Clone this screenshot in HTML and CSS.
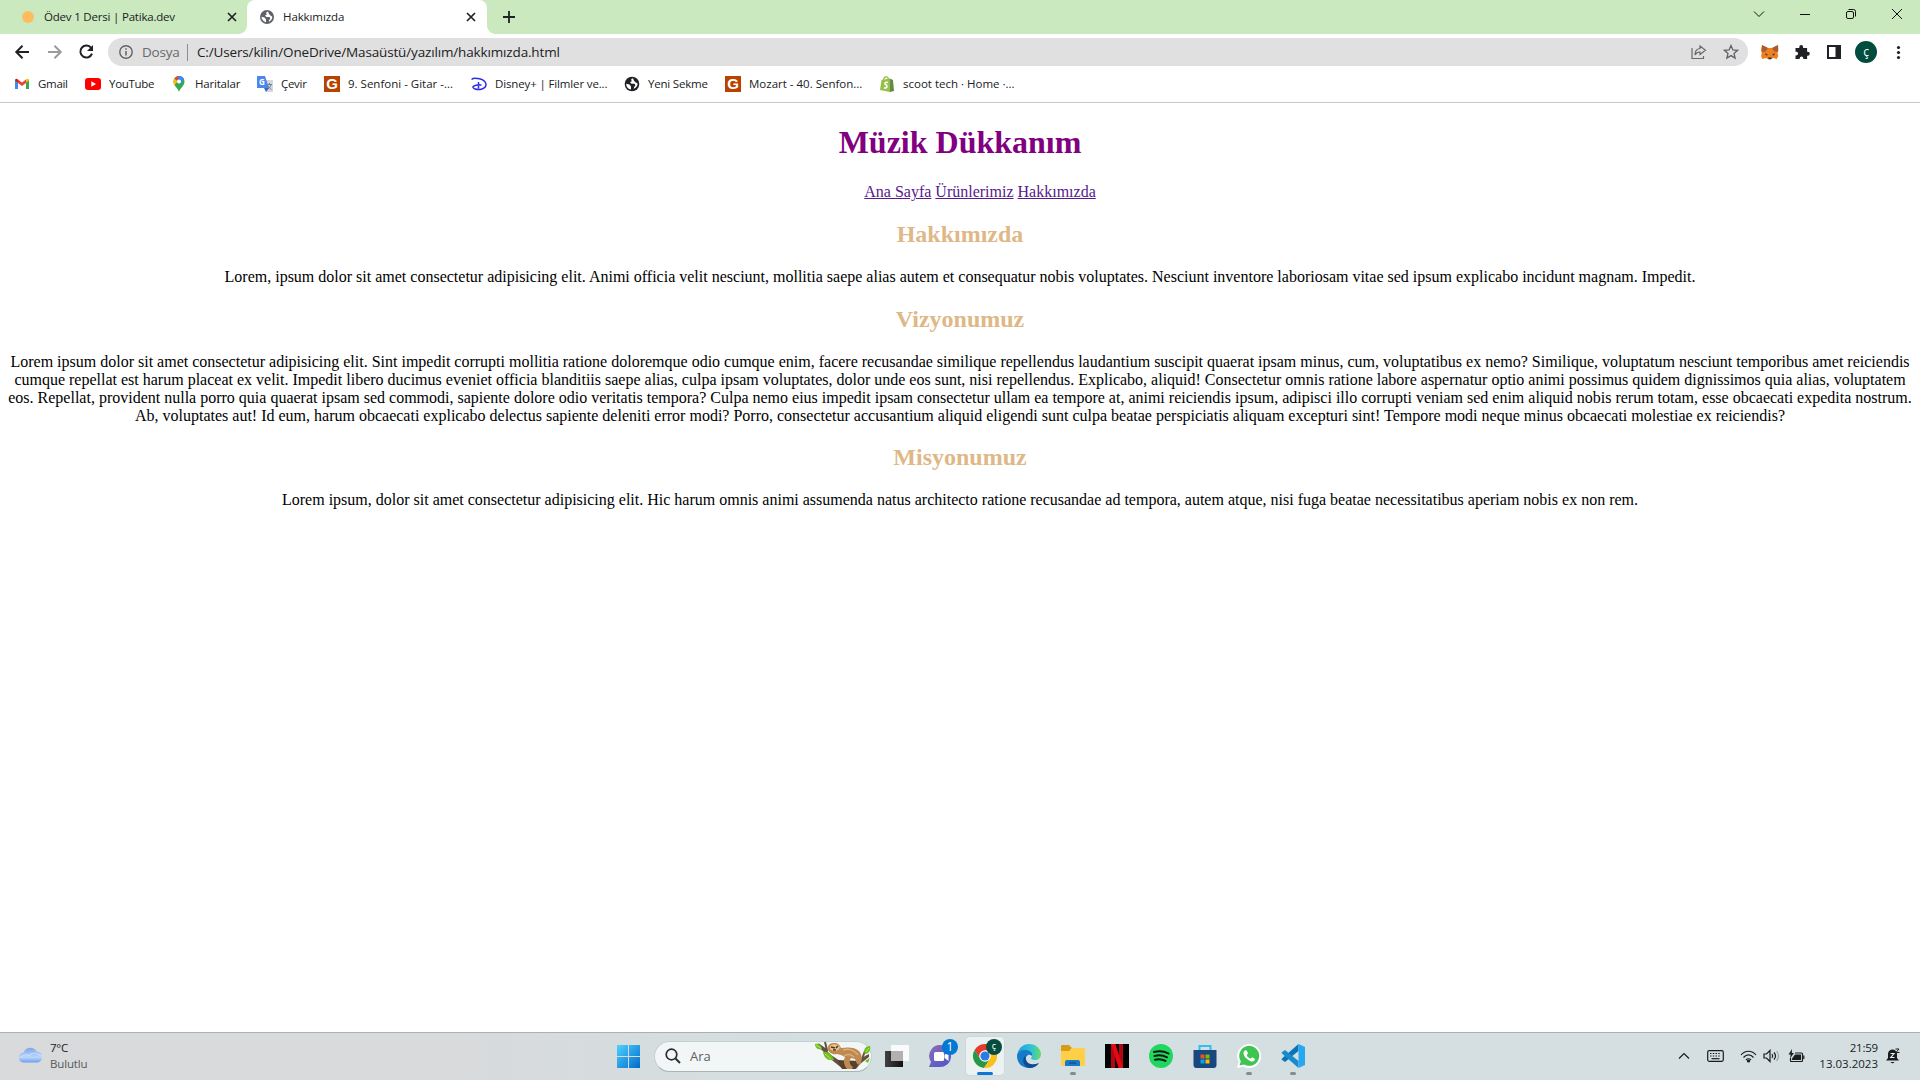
FILE: index.html
```html
<!DOCTYPE html>
<html lang="tr">
<head>
<meta charset="utf-8">
<title>Hakkımızda</title>
<link rel="stylesheet" href="styles.css">
</head>
<body>
<header class="tabs">
  <div class="tab">
    <span class="dot"></span><span class="tab-title t-patika">Ödev 1 Dersi | Patika.dev</span>
    <svg class="x" width="10" height="10" viewBox="0 0 10 10"><path d="M1 1l8 8M9 1L1 9"/></svg>
  </div>
  <div class="tab active">
    <svg width="14" height="14" viewBox="0 0 14 14"><circle cx="7" cy="7" r="7" fill="#5f6368"/><path d="M1.500 6.800L4.500 7.500 6 9.500v2.700C3.500 11.800 1.500 9.500 1.500 6.800zM8 1.500C6 2 5.500 3.500 7 4.200L5 5.500 6.500 7h2.700c1.500.5 1.300 2.200 0 3l-.5 1.800c2-.7 3.700-2.700 3.600-5L10.500 5.500 9 4z" fill="#fff"/></svg>
    <span class="tab-title t-hak">Hakkımızda</span>
    <svg class="x" width="10" height="10" viewBox="0 0 10 10"><path d="M1 1l8 8M9 1L1 9"/></svg>
  </div>
  <svg class="plus" width="12" height="12" viewBox="0 0 12 12"><path d="M6 0v12M0 6h12" stroke="#202124" stroke-width="1.800"/></svg>
  <div class="window-buttons">
    <svg width="46" height="28" viewBox="0 0 46 28"><path d="M18 11.500l5 5 5-5"/></svg>
    <svg width="46" height="28" viewBox="0 0 46 28"><path d="M18 14.500h10"/></svg>
    <svg width="46" height="28" viewBox="0 0 46 28"><rect x="18.500" y="11.500" width="7" height="7" rx="1.500"/><path d="M20.500 9.500h5q2 0 2 2v5"/></svg>
    <svg width="46" height="28" viewBox="0 0 46 28"><path d="M18 9l10 10M28 9L18 19"/></svg>
  </div>
</header>

<div class="toolbar">
  <svg class="nav-icon" width="32" height="28" viewBox="0 0 32 28"><path d="M22 14H9.500M15.500 7.800L9.300 14l6.200 6.200" stroke="#202124"/></svg>
  <svg class="nav-icon" width="32" height="28" viewBox="0 0 32 28"><path d="M9 14h12.500M15.500 7.800l6.200 6.200-6.200 6.200" stroke="#9b9b9d"/></svg>
  <svg class="nav-icon" width="32" height="28" viewBox="0 0 32 28"><path d="M20.200 10A6 6 0 1 0 21 15.700" stroke="#202124"/><path d="M22 7v6h-6z" fill="#202124"/></svg>
  <div class="address">
    <svg width="14" height="14" viewBox="0 0 14 14"><circle cx="7" cy="7" r="6.200" fill="none" stroke="#5f6368" stroke-width="1.400"/><path d="M7 6v4.500M7 3.300v1.500" stroke="#5f6368" stroke-width="1.500"/></svg>
    <span class="scheme">Dosya</span><span class="rule"></span>
    <span class="url">C:/Users/kilin/OneDrive/Masaüstü/yazılım/hakkımızda.html</span>
    <svg class="share" width="16" height="16" viewBox="0 0 16 16" fill="none" stroke="#66696d" stroke-width="1.200"><path d="M1 4v10.500h11.500V12M9 2l5.500 4.300L9 10.500V8C6.500 8 5 9 4 11c0-4 2-6.200 5-6.500z"/></svg>
    <svg class="star" width="16" height="16" viewBox="0 0 16 16"><path d="M8 1.500l1.900 4.400 4.700.4-3.600 3.100 1.100 4.700L8 11.600 3.900 14.100 5 9.400 1.400 6.300l4.700-.4z" fill="none" stroke="#5f6368" stroke-width="1.300"/></svg>
  </div>
  <div class="extensions">
    <svg width="32" height="28" viewBox="0 0 32 28"><path d="M8 7l6 3h4l6-3 .5 5-1 3 .8 3-1.500 3-4-1-2 1.300h-2.600l-2-1.300-4 1-1.200-3 .8-3-1-3z" fill="#ed8021"/><path d="M8 7l6 3-2.500 3.500-3.500.500zM24 7l-6 3 2.500 3.500 3.500.500z" fill="#a75c32"/><path d="M11 15l3 2-2 .5zM21 15l-3 2 2 .5zM14 19.500h4l-.8 1.800h-2.400z" fill="#3b3031"/></svg>
    <svg width="32" height="28" viewBox="0 0 32 28"><path d="M9.500 10h3.800V9a1.900 1.900 0 0 1 3.800 0v1h4v3.700h.7a2 2 0 0 1 0 4h-.7V21h-3.800v-.8a1.800 1.800 0 0 0-3.600 0v.8H9.500v-3.600h.8a1.800 1.800 0 0 0 0-3.600h-.8z" fill="#202124"/></svg>
    <svg width="32" height="28" viewBox="0 0 32 28"><path d="M9 7h14v14H9zM11 9v10h6.500V9z" fill="#202124" fill-rule="evenodd"/></svg>
    <span class="avatar">ç</span>
    <svg width="32" height="28" viewBox="0 0 32 28" fill="#202124"><circle cx="16.500" cy="9.500" r="1.600"/><circle cx="16.500" cy="14.500" r="1.600"/><circle cx="16.500" cy="19.500" r="1.600"/></svg>
  </div>
</div>

<nav class="bookmarks">
  <a class="b-gmail"><svg viewBox="0 0 16 16"><path d="M1 3.500v9.500h3V6z" fill="#4285f4"/><path d="M15 3.500v9.500h-3V6z" fill="#34a853"/><path d="M1 4.500l3 2.200V3.500C2.500 2 1 2.800 1 4.500z" fill="#c5221f"/><path d="M12 3.500v3.200l3-2.200c0-1.700-1.500-2.500-3-1z" fill="#fbbc04"/><path d="M4 3.500l4 3 4-3v3.400L8 10 4 6.900z" fill="#ea4335"/></svg><span>Gmail</span></a>
  <a class="b-youtube"><svg viewBox="0 0 16 16"><rect y="2" width="16" height="12" rx="3" fill="#f00"/><path d="M6.300 5.300L11 8l-4.700 2.700z" fill="#fff"/></svg><span>YouTube</span></a>
  <a class="b-maps"><svg viewBox="0 0 16 16"><path d="M8 16C7 12 2.500 10 2.500 5.500A5.500 5.500 0 0 1 13.500 5.500C13.500 10 9 12 8 16z" fill="#34a853"/><path d="M3.500 2.500L7 5 3.500 9.300C2 6.500 2.300 4 3.500 2.500z" fill="#fbbc04"/><path d="M3.500 2.500A5.500 5.500 0 0 1 7.500 0L10 1 6.300 5z" fill="#ea4335"/><path d="M8 0a5.500 5.500 0 0 1 5 3L8.500 8.500 6 5.500z" fill="#4285f4"/><circle cx="8" cy="5.400" r="2" fill="#fff"/></svg><span>Haritalar</span></a>
  <a class="b-translate"><svg viewBox="0 0 16 16"><path d="M7 4h9v12H9z" fill="#d6d8db"/><path d="M10 8.500h5M12.500 7v1.500M14 8.500c-.5 2.500-2 4-3.500 5M11 9.500c.8 2 2 3 3.500 4" stroke="#718087" fill="none"/><path d="M0 0h8l4 12H0z" fill="#4a87ee"/><path d="M7 12h5l-3 4z" fill="#3367d6"/></svg><b class="translate-g">G</b><span>Çevir</span></a>
  <a class="b-nine"><i class="g-tile">G</i><span>9. Senfoni - Gitar -...</span></a>
  <a class="b-disney"><svg viewBox="0 0 16 16" fill="none" stroke="#2b2be8" stroke-width="1.500"><path d="M.5 3.500C3 1 14.500 2.500 15 8.500c0 4.500-7 6-11.500 4.200-3.500-1.700-1-4.200 7-3.700M7.500 6v6.500"/></svg><span>Disney+ | Filmler ve...</span></a>
  <a class="b-tab"><svg viewBox="0 0 16 16"><circle cx="8" cy="8" r="7.300" fill="#202124"/><path d="M2.200 7.700l3.300.8 1.500 2v3C4.500 13.200 2.200 11 2.200 7.700zM9 2.300C7 2.800 6.500 4.300 8 5L6 6.300l1.500 1.500h2.700c1.500.5 1.300 2.200 0 3l-.5 2c2.200-.8 4-2.900 3.900-5.300L11.500 6.300 10 4.800z" fill="#fff"/></svg><span>Yeni Sekme</span></a>
  <a class="b-mozart"><i class="g-tile">G</i><span>Mozart - 40. Senfon...</span></a>
  <a class="b-scoot"><svg viewBox="0 0 16 16"><path d="M2.500 4l8-1.500L11 16 1 14z" fill="#95bf47"/><path d="M10.500 2.500L14 4l1 11-4 1z" fill="#5e8e3e"/><path d="M4.500 4C5 0 9 0 9.500 3.500" fill="none" stroke="#95bf47" stroke-width="1.200"/><path d="M9 6.500C6 5.500 5 8 7 9s1 4-2 2.700" fill="none" stroke="#fff" stroke-width="1.500"/></svg><span>scoot tech · Home ·...</span></a>
</nav>

<main class="page">
  <h1>Müzik Dükkanım</h1>
  <ul><li><a href="#">Ana Sayfa</a></li> <li><a href="#">Ürünlerimiz</a></li> <li><a href="#">Hakkımızda</a></li></ul>
  <h2>Hakkımızda</h2>
  <p>Lorem, ipsum dolor sit amet consectetur adipisicing elit. Animi officia velit nesciunt, mollitia saepe alias autem et consequatur nobis voluptates. Nesciunt inventore laboriosam vitae sed ipsum explicabo incidunt magnam. Impedit.</p>
  <h2>Vizyonumuz</h2>
  <p>Lorem ipsum dolor sit amet consectetur adipisicing elit. Sint impedit corrupti mollitia ratione doloremque odio cumque enim, facere recusandae similique repellendus laudantium suscipit quaerat ipsam minus, cum, voluptatibus ex nemo? Similique, voluptatum nesciunt temporibus amet reiciendis cumque repellat est harum placeat ex velit. Impedit libero ducimus eveniet officia blanditiis saepe alias, culpa ipsam voluptates, dolor unde eos sunt, nisi repellendus. Explicabo, aliquid! Consectetur omnis ratione labore aspernatur optio animi possimus quidem dignissimos quia alias, voluptatem eos. Repellat, provident nulla porro quia quaerat ipsam sed commodi, sapiente dolore odio veritatis tempora? Culpa nemo eius impedit ipsam consectetur ullam ea tempore at, animi reiciendis ipsum, adipisci illo corrupti veniam sed enim aliquid nobis rerum totam, esse obcaecati expedita nostrum. Ab, voluptates aut! Id eum, harum obcaecati explicabo delectus sapiente deleniti error modi? Porro, consectetur accusantium aliquid eligendi sunt culpa beatae perspiciatis aliquam excepturi sint! Tempore modi neque minus obcaecati molestiae ex reiciendis?</p>
  <h2>Misyonumuz</h2>
  <p>Lorem ipsum, dolor sit amet consectetur adipisicing elit. Hic harum omnis animi assumenda natus architecto ratione recusandae ad tempora, autem atque, nisi fuga beatae necessitatibus aperiam nobis ex non rem.</p>
</main>

<footer class="taskbar">
  <div class="weather">
    <svg width="26" height="18" viewBox="0 0 26 18"><defs><linearGradient id="cl" x2="0" y2="1"><stop stop-color="#7fa6ea"/><stop offset=".65" stop-color="#b9d5fc"/><stop offset="1" stop-color="#6f9cec"/></linearGradient></defs><path d="M6 16.500a5 5 0 0 1-.3-10A7 7 0 0 1 18.500 5.500a5.600 5.600 0 0 1 1.200 11z" fill="url(#cl)"/><path d="M3 12c2-4 6-4 8-2 3-4 8-4 12 0" fill="none" stroke="#d4e5ff" stroke-width="1.200" opacity=".7"/></svg>
    <div><div class="temp">7°C</div><div class="cond">Bulutlu</div></div>
  </div>
  <div class="apps">
    <div class="app"><svg viewBox="0 0 24 24"><defs><linearGradient id="wn" x2="1" y2="1"><stop stop-color="#4fd2ff"/><stop offset="1" stop-color="#0069cc"/></linearGradient></defs><path d="M1 1h11v11H1zM13 1h11v11H13zM1 13h11v11H1zM13 13h11v11H13z" fill="url(#wn)"/></svg></div>
    <div class="search">
      <svg width="16" height="16" viewBox="0 0 16 16"><path d="M10.500 10.500l4.500 4.500" stroke="#2a2e30" stroke-width="2"/><circle cx="6.500" cy="6.500" r="5.300" fill="none" stroke="#2a2e30" stroke-width="1.700"/></svg>
      <span>Ara</span>
      <svg class="sloth" width="56" height="30" viewBox="0 0 56 30">
        <path d="M2 3l9 6 5 5 12 8 14-1 8-6 4-2v3l-9 7-4 5H28L18 20 9 11 2 5z" fill="#66503f"/><path d="M10 1l2 8M3 3l10 7M50 10l-3 8" stroke="#66503f" stroke-width="2"/><path d="M22 19l5 9h13l5-8" fill="#59402f"/>
        <path d="M13 7c0-4 3-5 6-5 4 0 6 2 7 5 7-1 14-1 18 3 4 5 3 10 1 14-3 0-4-3-5-6l-4-1c-2 3-2 6 2 9l-1 2h-5c-3-4-4-8-2-12l-4-2-4-1c-4 1-9-1-9-6z" fill="#bd8a51"/><path d="M15 5c3-3 8-2 10 1-1 4-6 6-10 2z" fill="#e7c48d"/><path d="M16 6l4 1M23 5l-2 2M18 9h3" stroke="#59351f" stroke-width="1.500"/><path d="M28 9c6-2 11 0 15 5M29 15c3-2 7-2 10 1" fill="none" stroke="#dcb077" stroke-width="1.500"/>
        <path d="M0 3c4-1 6 1 7 5-4 1-7-1-7-5zM8 11c5-1 9 2 11 8-6 1-10-2-11-8zM55 5c-5 0-7 4-5 8 4 0 6-4 5-8zM55 17l-5 3 3 2z" fill="#71bd21"/><path d="M1 4l5 3M10 13l6 5M54 7l-3 4" stroke="#b7e75c"/>
      </svg>
    </div>
    <div class="app"><svg viewBox="0 0 24 24"><defs><linearGradient id="tv" x2="1"><stop stop-color="#414141"/><stop offset="1" stop-color="#101010"/></linearGradient></defs><path d="M0 7h18v16H0z" fill="url(#tv)"/><path d="M6 1h18v16H6z" fill="#fff" opacity=".85"/><path d="M6 7h12v10H6z" fill="#b1b1b1"/></svg></div>
    <div class="app"><svg viewBox="0 0 24 24"><defs><linearGradient id="ch" y2="1"><stop stop-color="#8b6db5"/><stop offset="1" stop-color="#4b55ca"/></linearGradient></defs><path d="M12 1a11 11 0 1 1-2 22H0l2-5A11 11 0 0 1 12 1z" fill="url(#ch)"/><rect x="5" y="8" width="10" height="9" rx="1.500" fill="#fff"/><path d="M15.500 11l4-3v9l-4-3z" fill="#fff"/></svg><b class="badge blue">1</b></div>
    <div class="app open"><svg viewBox="0 0 24 24"><path d="M1.600 6A12 12 0 0 1 22.400 6L12 6.500 7 15z" fill="#e33b2e"/><path d="M1.600 6A12 12 0 0 0 11 24l6-9-10-.5z" fill="#279847"/><path d="M12 6.500L22.400 6A12 12 0 0 1 11 24l6-9z" fill="#fbc116"/><circle cx="12" cy="12" r="5.800" fill="#fff"/><circle cx="12" cy="12" r="4.600" fill="#2c7be5"/></svg><b class="badge green">ç</b><i class="mark wide"></i></div>
    <div class="app"><svg viewBox="0 0 24 24"><defs><linearGradient id="ed" x2="1"><stop stop-color="#259fe5"/><stop offset=".6" stop-color="#2fc3d3"/><stop offset="1" stop-color="#68dc65"/></linearGradient></defs><path d="M0 12C1 4 6 0 12 0c7 0 12 5 12 10 0 4-3 6-6 6s-4-1-4-2c1-1 1-2 1-3C14 7 5 6 0 12z" fill="url(#ed)"/><path d="M0 12c1-5 5-6 8-6 5 0 8 3 7 6-3-3-7 0-6 4 1 4 6 6 13 3-2 3-6 5-10 5C5 24 0 19 0 12z" fill="#147ac9"/><path d="M9 11c-5 4-3 11 3 13 4 0 8-2 10-5-7 3-12 1-13-3-1-2-.5-4 0-5z" fill="#124b91"/></svg></div>
    <div class="app"><svg viewBox="0 0 24 24"><path d="M0 2q0-1 1-1h7l3 3-3 4H0z" fill="#d99b16"/><path d="M0 7h8l3-3h12q1 0 1 1v17H0z" fill="#ffcf48"/><path d="M4 22v-4q0-2 2-2h11q2 0 2 2v4z" fill="#1679ca"/><path d="M8 19h7" stroke="#0c5591" stroke-width="1.500"/></svg><i class="mark"></i></div>
    <div class="app"><svg viewBox="0 0 24 24"><path d="M0 0h24v24H0z"/><path d="M6 0h4v24H6zM14 0h4v24h-4z" fill="#b20710"/><path d="M6 0h4.500L18 24h-4.500z" fill="#e50914"/></svg></div>
    <div class="app"><svg viewBox="0 0 24 24"><circle cx="12" cy="12" r="12" fill="#1ed760"/><path d="M5 8c5-1.500 10-1 14.500 1.500M5.500 12c4.500-1.200 8.500-.8 12.500 1.300M6 15.700c4-.9 7-.6 10.500 1.200" fill="none" stroke="#0a180e" stroke-width="2" stroke-linecap="round"/></svg></div>
    <div class="app"><svg viewBox="0 0 24 24"><path d="M6.500 7V2h11v5" fill="none" stroke="#31bff0" stroke-width="2"/><path d="M.5 6h23v15q0 3-3 3h-17q-3 0-3-3z" fill="#19477f"/><path d="M7.500 10.500h4v4h-4z" fill="#f25022"/><path d="M12.500 10.500h4v4h-4z" fill="#7fba00"/><path d="M7.500 15.500h4v4h-4z" fill="#00a4ef"/><path d="M12.500 15.500h4v4h-4z" fill="#ffb900"/></svg></div>
    <div class="app"><svg viewBox="0 0 24 24"><path d="M0 24l1.700-6A12 12 0 1 1 6 22.400z" fill="#fff"/><path d="M2.500 21.500l1.300-4.300a10 10 0 1 1 3.300 3.200z" fill="#3fc351"/><path d="M8 6.500c-3 2-1 6 2 8.500s6 3.500 7.500 1.500c.8-1 .5-1.800-.5-2.300l-2-1-1.500 1.500c-2-1-3-2-3.800-3.800L11 9.500 10 7q-.7-1.300-2-.5z" fill="#fff"/></svg><i class="mark"></i></div>
    <div class="app"><svg viewBox="0 0 24 24"><path d="M17.500 0v7L4 18l-3.500-2.500 1-1.500z" fill="#0b74b8"/><path d="M17.500 24v-7L4 6 .5 8.500l1 1.500z" fill="#168cce"/><path d="M17.500 0L24 3v18l-6.500 3z" fill="#27a6f1"/></svg><i class="mark"></i></div>
  </div>
  <div class="tray">
    <svg class="up" width="12" height="8" viewBox="0 0 12 8"><path d="M1 6.500l5-5 5 5"/></svg>
    <svg class="kb" width="17" height="12" viewBox="0 0 17 12"><rect x=".7" y=".7" width="15.600" height="10.600" rx="1.500"/><path d="M3 3.500h11M3 6h11" stroke-dasharray="1.500 1.250"/><path d="M4.500 8.700h8"/></svg>
    <svg class="wifi" width="17" height="13" viewBox="0 0 17 13"><path d="M1 5c4-5 11-5 15 0M3.500 7.500c3-3.500 7-3.500 10 0M6 10c1.500-1.700 3.500-1.700 5 0"/><circle cx="8.500" cy="11" r="1" fill="#181c1d"/></svg>
    <svg class="vol" width="17" height="14" viewBox="0 0 17 14"><path d="M1 5h2.500l3.500-3.500v11L3.500 9H1zM9 5q1.500 2 0 4M11 3.500q3 3.500 0 7"/><path d="M13.500 2q4 5 0 10" opacity=".3"/></svg>
    <svg class="bat" width="17" height="14" viewBox="0 0 17 14"><path d="M7 4h6.500q1 0 1 1v6.500q0 1-1 1h-10q-1 0-1-1V9"/><path d="M7 5.500h6v5.500H4V9.500z" fill="#181c1d" stroke="none"/><path d="M15.800 6.500v3.500"/><path d="M4 0L.5 5.500h2.200L2 9.500 6 4H3.800z" fill="#181c1d" stroke="none"/></svg>
    <div class="clock"><div class="time">21:59</div><div class="date">13.03.2023</div></div>
    <svg class="bell" width="14" height="16" viewBox="0 0 14 16"><path d="M2 6c0-6 9-6 9 0v4l2 2.500H0L2 10zM4.500 14h4q-2 2.500-4 0z" fill="#181c1d" stroke="none"/><path d="M4.500 5.500H8L4.800 9.500h3.700" stroke="#e8eeef" stroke-width="1.200"/><path d="M9.500 1h3.500L10 4.500h3.500"/></svg>
  </div>
</footer>
</body>
</html>
```

FILE: styles.css
```css
* { box-sizing: border-box; }
body { margin: 0; height: 1080px; display: flex; flex-direction: column; overflow: hidden; background: #fff; font-family: "Open Sans", "Noto Sans", sans-serif; color: #202124; }
svg { flex: none; display: block; }

.tabs { height: 34px; flex: none; display: flex; background: #cbe9be; }
.tab { display: flex; align-items: center; width: 240px; height: 34px; padding: 0 11px 0 13px; }
.tab:first-child { width: 247px; padding: 0 10px 0 22px; }
.tab.active { position: relative; background: #fff; border-radius: 8px 8px 0 0; }
.tab.active::before, .tab.active::after { content: ""; position: absolute; bottom: 0; width: 8px; height: 8px; }
.tab.active::before { left: -8px; background: radial-gradient(circle at 0 0, transparent 7.5px, #fff 8px); }
.tab.active::after { right: -8px; background: radial-gradient(circle at 100% 0, transparent 7.5px, #fff 8px); }
.dot { width: 12px; height: 12px; border-radius: 50%; background: #ffbc5e; margin-right: 10px; }
.tab-title { font-size: 11.5px; line-height: 16px; white-space: nowrap; }
.t-patika { letter-spacing: -.2px; }
.t-hak { margin-left: 9px; letter-spacing: -.1px; }
.x { margin-left: auto; fill: none; stroke: #202124; stroke-width: 1.7; }
.plus { margin: 11px 0 0 16px; }
.window-buttons { display: flex; margin-left: auto; }
.window-buttons svg { fill: none; stroke: #111; }

.toolbar { flex: none; height: 36px; display: flex; align-items: center; padding-left: 7px; }
.nav-icon { fill: none; stroke-width: 2; }
.address { display: flex; align-items: center; width: 1640px; height: 28px; margin-left: 5px; padding: 0 9px 0 11px; border-radius: 14px; background: #e0e0e0; font-size: 13.5px; line-height: 18px; }
.scheme { width: 37px; margin-left: 9px; color: #66696d; letter-spacing: -.2px; }
.rule { width: 1px; height: 17px; margin: 0 9px 0 8px; background: #8b8d90; }
.url { letter-spacing: -.15px; white-space: nowrap; }
.share { margin-left: auto; }
.star { margin-left: 16px; }
.extensions { display: flex; align-items: center; margin-left: 6px; }
.avatar { display: grid; place-items: center; width: 22px; height: 22px; margin: 0 5px; border-radius: 50%; background: #004d40; color: #fff; font: 12px/20px "Open Sans", sans-serif; }

.bookmarks { flex: none; height: 33px; display: grid; grid-template-columns: 71px 86px 86px 67px 147px 153px 101px 154px 160px; padding: 0 0 5px 14px; border-bottom: 1px solid #c8c8c8; }
.bookmarks a { position: relative; display: flex; align-items: center; gap: 8px; font-size: 11.5px; letter-spacing: -.3px; white-space: nowrap; }
.bookmarks .b-nine, .bookmarks .b-mozart, .bookmarks .b-scoot { letter-spacing: 0; }
.bookmarks .b-disney { letter-spacing: -.14px; }
.bookmarks .b-tab { letter-spacing: -.2px; }
.bookmarks .b-maps { letter-spacing: -.2px; }
.bookmarks svg, .g-tile { width: 16px; height: 16px; }
.g-tile { display: grid; place-items: center; background: #b84300; color: #fff; font: bold 15px/16px "Liberation Sans", sans-serif; }
.translate-g { position: absolute; left: 2px; top: 7px; color: #fff; font-size: 8px; line-height: 10px; }

.page { flex: 1; margin: 0 8px; color: #000; text-align: center; font: 16px "Liberation Serif", serif; }
.page h1 { margin: 21.44px 0; font-size: 32px; color: purple; }
.page h2 { margin: 19.92px 0; font-size: 24px; color: burlywood; }
.page p { margin: 16px 0; }
.page ul { margin: 16px 0; padding-left: 40px; list-style: none; }
.page li { display: inline; }
.page a { color: #551a8b; }

.taskbar { flex: none; height: 48px; display: flex; border-top: 1px solid #a9b1b3; background: linear-gradient(90deg, #d9dadb, #d8dadc 24%, #d4dfe1 42%, #d5dfe1); }
.weather { width: 606px; display: flex; padding: 7px 0 0 18px; font-size: 11.5px; line-height: 16px; }
.weather svg { margin: 6px 6px 0 0; }
.temp { letter-spacing: -.3px; }
.cond { color: #56595b; letter-spacing: -.15px; }
.apps { display: flex; align-items: center; height: 46px; }
.app { position: relative; width: 44px; height: 46px; display: grid; place-items: center; }
.app svg { width: 24px; height: 24px; z-index: 1; }
.app.open::before { content: ""; position: absolute; inset: 4px 3px; border-radius: 4px; background: #ecf1f2; box-shadow: 0 0 0 .5px #c8d0d2; }
.badge { position: absolute; z-index: 2; left: 23px; top: 6px; width: 16px; height: 16px; border-radius: 50%; color: #fff; text-align: center; font: 12px/16px "Open Sans", sans-serif; }
.blue { background: #0078d4; }
.green { background: #064d3f; font-size: 9px; line-height: 14px; }
.mark { position: absolute; z-index: 2; bottom: 4px; left: 19px; width: 6px; height: 3px; border-radius: 2px; background: #858b8d; }
.mark.wide { left: 14px; width: 16px; background: #0878d2; }
.search { display: flex; align-items: center; width: 218px; height: 31px; margin: 0 3px 0 4px; padding-left: 10px; border: 1px solid #c5d0d2; border-bottom-color: #a8b4b6; border-radius: 16px; background: #f3f6f7; font-size: 13px; color: #5b5f61; }
.search span { margin-left: 9px; }
.sloth { margin-left: auto; }
.tray { display: flex; align-items: center; height: 46px; margin-left: auto; padding-right: 20px; }
.tray svg { fill: none; stroke: #181c1d; stroke-width: 1.2; }
.kb { margin-left: 17px; }
.wifi { margin-left: 16px; }
.vol { margin-left: 6px; }
.bat { margin-left: 8px; }
.clock { width: 73px; text-align: right; font-size: 11.5px; line-height: 16px; white-space: nowrap; }
.time { letter-spacing: -.2px; }
.date { letter-spacing: 0; }
.tray .bell { margin-left: 8px; stroke-width: 1; }
```
